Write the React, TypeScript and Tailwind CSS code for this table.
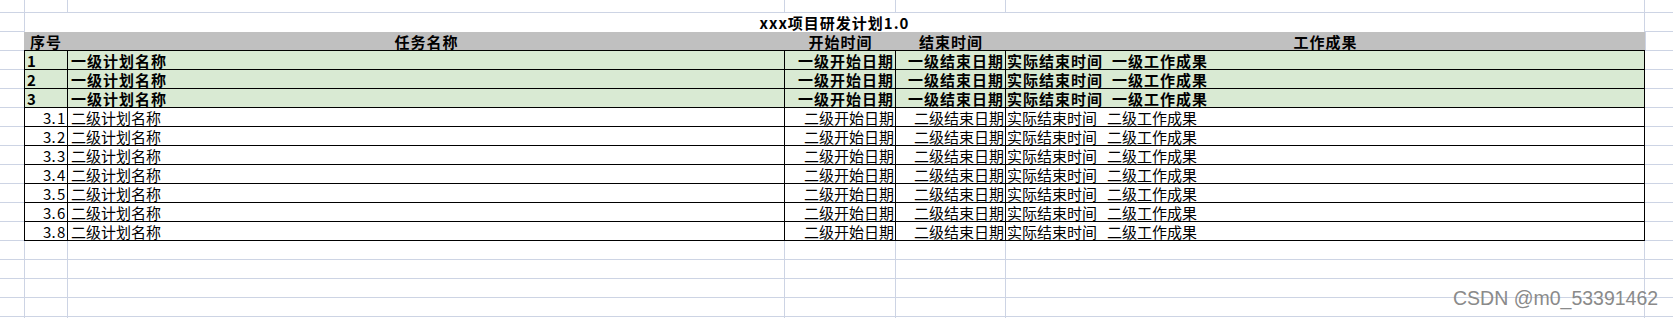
import React from "react";

const G = "border-[#cdd4e4]";
const FONT = { fontFamily: '"Noto Sans CJK SC", "Noto Sans", sans-serif' };

type Lvl = { no: string; lvl: 1 | 2 };
const rows: Lvl[] = [
  { no: "1", lvl: 1 },
  { no: "2", lvl: 1 },
  { no: "3", lvl: 1 },
  { no: "3.1", lvl: 2 },
  { no: "3.2", lvl: 2 },
  { no: "3.3", lvl: 2 },
  { no: "3.4", lvl: 2 },
  { no: "3.5", lvl: 2 },
  { no: "3.6", lvl: 2 },
  { no: "3.8", lvl: 2 },
];

function EmptyRow({ h = "h-[19px]" }: { h?: string }) {
  return (
    <div className={`flex ${h}`}>
      <div className={`w-[25px] shrink-0 border-r border-b ${G}`} />
      <div className={`w-[43px] shrink-0 border-r border-b ${G}`} />
      <div className={`w-[717px] shrink-0 border-r border-b ${G}`} />
      <div className={`w-[111px] shrink-0 border-r border-b ${G}`} />
      <div className={`w-[110px] shrink-0 border-r border-b ${G}`} />
      <div className={`w-[639px] shrink-0 border-r border-b ${G}`} />
      <div className={`flex-1 border-b ${G}`} />
    </div>
  );
}

function MonoNum({ s }: { s: string }) {
  return (
    <span className="inline-flex">
      {s.split("").map((c, i) => (
        <span key={i} className="inline-block w-[7px] text-center">
          {c}
        </span>
      ))}
    </span>
  );
}

function DataRow({ r }: { r: Lvl }) {
  const l1 = r.lvl === 1;
  const bg = l1 ? "bg-[#d9ead3]" : "bg-white";
  const txt = l1 ? "font-bold tracking-[1px]" : "font-normal";
  const cell = `shrink-0 border-r border-b border-black ${bg} text-[15px] leading-[20px] text-black whitespace-nowrap overflow-visible`;
  const lv = l1 ? "一级" : "二级";
  return (
    <div className="flex h-[19px]">
      <div className="w-[24px] shrink-0 border-b border-[#cdd4e4]" />
      <div className="w-px shrink-0 bg-black" />
      <div className={`w-[43px] ${cell} ${txt} ${l1 ? "pl-[2px] text-left" : "pr-[3px] text-right"}`}>
        {l1 ? r.no : <MonoNum s={r.no} />}
      </div>
      <div className={`w-[717px] ${cell} ${txt} pl-[3px]`}>{lv}计划名称</div>
      <div className={`w-[111px] ${cell} ${txt} text-right pr-[1px]`}>{lv}开始日期</div>
      <div className={`w-[110px] ${cell} ${txt} text-right pr-[1px]`}>{lv}结束日期</div>
      <div className={`w-[639px] ${cell} ${txt} pl-[1px] flex`}>
        <span>实际结束时间</span>
        <span className={l1 ? "ml-[9px]" : "ml-[10px]"}>{lv}工作成果</span>
      </div>
      <div className={`flex-1 border-b ${G}`} />
    </div>
  );
}

export default function App() {
  const head = "shrink-0 h-full bg-[#c0c0c0] border-b border-black text-[15px] leading-[20px] font-bold tracking-[1px] text-black text-center whitespace-nowrap";
  return (
    <div className="relative w-[1673px] h-[318px] overflow-hidden bg-white" style={FONT}>
      <EmptyRow h="h-[13px]" />
      {/* title row */}
      <div className="flex h-[19px]">
        <div className={`w-[25px] shrink-0 border-r border-b ${G}`} />
        <div className={`w-[1620px] shrink-0 border-r ${G} border-b-0 text-center text-[15px] leading-[20px] font-bold tracking-[1px] text-black`}>
          xxx项目研发计划1.0
        </div>
        <div className={`flex-1 border-b ${G}`} />
      </div>
      {/* header row */}
      <div className="flex h-[19px]">
        <div className={`w-[24px] shrink-0 border-b ${G}`} />
        <div className={`w-[44px] ${head}`}>序号</div>
        <div className={`w-[717px] ${head}`}>任务名称</div>
        <div className={`w-[111px] ${head}`}>开始时间</div>
        <div className={`w-[110px] ${head}`}>结束时间</div>
        <div className={`w-[639px] ${head}`}>工作成果</div>
        <div className={`flex-1 border-l border-b ${G}`} />
      </div>
      {rows.map((r) => (
        <DataRow key={r.no} r={r} />
      ))}
      <EmptyRow />
      <EmptyRow />
      <EmptyRow />
      <EmptyRow />
      <EmptyRow />
      <div
        className="absolute left-[1453px] top-[289px] text-[19.5px] leading-none text-[#8a8a8a] whitespace-nowrap"
        style={{ fontFamily: '"Liberation Sans", Arial, sans-serif' }}
      >
        CSDN @m0_53391462
      </div>
    </div>
  );
}
